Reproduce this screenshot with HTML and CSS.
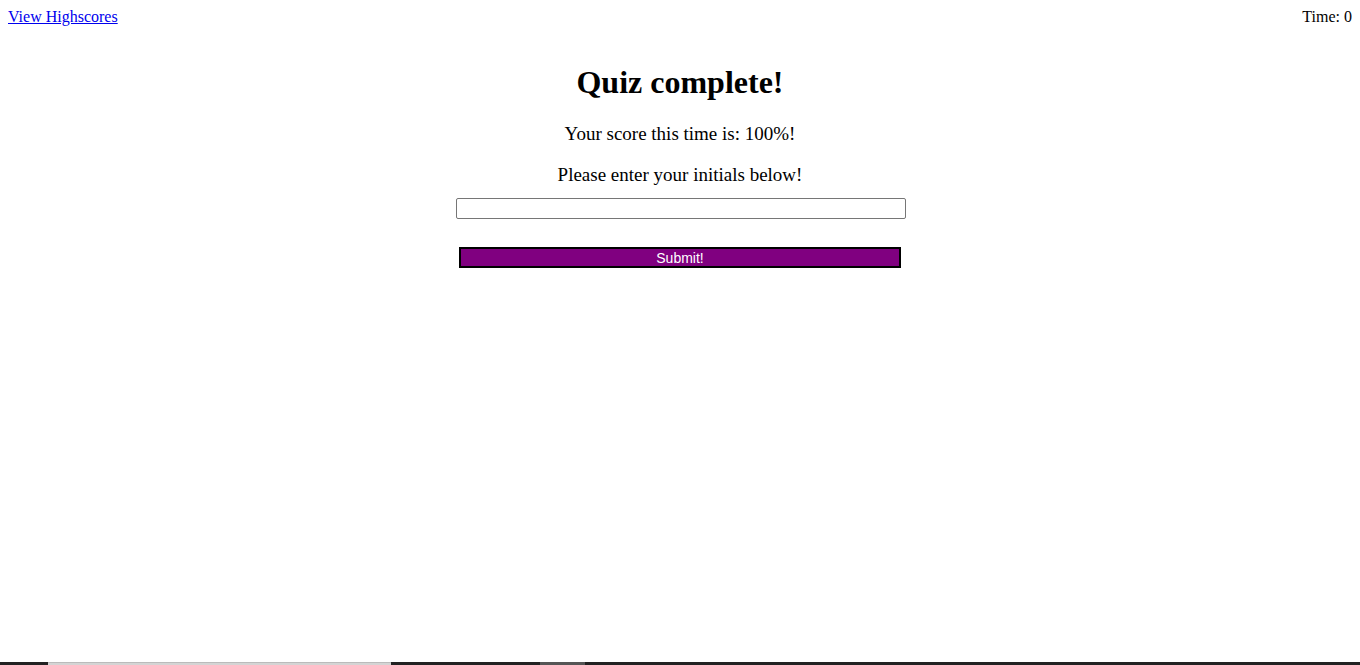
FILE: index.html
```html
<!DOCTYPE html>
<html>
<head>
<meta charset="utf-8">
<link rel="stylesheet" href="styles.css">
</head>
<body>
<header class="topbar">
  <a class="scores-link" href="#">View Highscores</a>
  <span class="timer">Time: 0</span>
</header>
<main class="done">
  <h1 class="done-title">Quiz complete!</h1>
  <p class="done-text">Your score this time is: 100%!</p>
  <p class="done-text done-prompt">Please enter your initials below!</p>
  <form class="initials-form">
    <input class="initials-input" type="text">
    <button class="submit-btn" type="button">Submit!</button>
  </form>
</main>
<div class="taskbar">
  <span class="tb-seg tb-dark1"></span>
  <span class="tb-seg tb-light"></span>
  <span class="tb-seg tb-dark2"></span>
  <span class="tb-seg tb-gray"></span>
  <span class="tb-seg tb-dark3"></span>
</div>
</body>
</html>
```
FILE: styles.css
```css
html, body {
  height: 100%;
}
body {
  margin: 8px;
  font-family: "Liberation Serif", "Times New Roman", serif;
  font-size: 16px;
  color: #000;
  background: #fff;
}
.topbar {
  display: flex;
  justify-content: space-between;
  align-items: baseline;
}
.scores-link {
  color: #0000ee;
}
.done {
  display: flex;
  flex-direction: column;
  align-items: center;
  margin-top: 38px;
}
.done-title {
  font-size: 32px;
  font-weight: bold;
  margin: 0 0 22px;
}
.done-text {
  font-size: 19px;
  margin: 0 0 19px;
}
.done-prompt {
  margin-bottom: 12px;
}
.initials-form {
  display: flex;
  flex-direction: column;
  align-items: center;
  gap: 28px;
}
.initials-input {
  width: 450px;
  height: 21px;
  box-sizing: border-box;
  border: 1px solid #767676;
  border-radius: 2px;
  margin: 0 0 0 2px;
  padding: 1px 2px;
}
.submit-btn {
  width: 442px;
  height: 21px;
  box-sizing: border-box;
  background: #800080;
  color: #fff;
  border: 2px solid #000;
  font-family: "Liberation Sans", Arial, sans-serif;
  font-size: 14px;
  padding: 0;
  margin: 0;
}
.taskbar {
  position: fixed;
  left: 0;
  right: 0;
  bottom: 0;
  height: 3px;
  display: flex;
}
.tb-seg { height: 100%; }
.tb-dark1 { width: 48px; background: #222; }
.tb-light { width: 343px; background: #d4d4d4; border-top: 1px solid #bbb; box-sizing: border-box; }
.tb-dark2 { width: 149px; background: #222; }
.tb-gray { width: 45px; background: #555; }
.tb-dark3 { flex: 1; background: #222; }
```
